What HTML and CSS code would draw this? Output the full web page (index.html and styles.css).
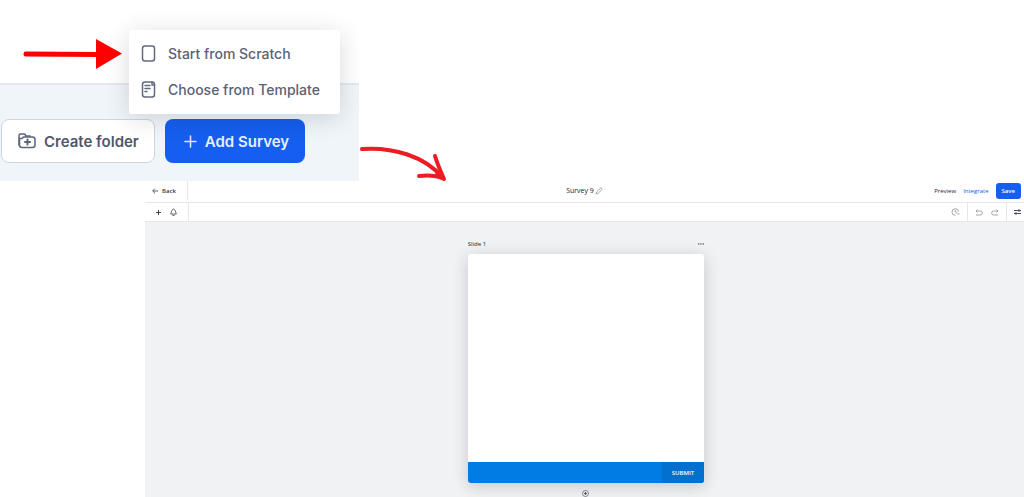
FILE: index.html
```html
<!DOCTYPE html>
<html lang="en">
<head>
  <meta charset="UTF-8" />
  <meta name="viewport" content="width=device-width, initial-scale=1.0"/>
  <title>Add Survey</title>
  <link rel="stylesheet" href="styles.css">
</head>
<body>

  <section class="folders">
    <div class="folders-top"></div>
    <div class="folders-actions">
      <button class="btn btn-folder">
        <svg width="18" height="16" viewBox="0 0 18 16" fill="none" stroke="#5b6579" stroke-width="1.5" stroke-linejoin="round" stroke-linecap="round">
          <path d="M1 12V2.500Q1 1 2.500 1H6.500L8 3H12"/>
          <path d="M1.500 5.500H4L5.500 4H14.500Q17 4 17 6.500V12Q17 14.500 14.500 14.500H4Q1.500 14.500 1.500 12Z"/>
          <path d="M9.500 6.500V11.500M7 9H12" stroke-width="2"/>
        </svg>
        Create folder
      </button>
      <button class="btn btn-survey">
        <svg width="13" height="13" viewBox="0 0 13 13" stroke="#dce7ff" stroke-width="1.600" stroke-linecap="round"><path d="M6.500 1V12M1 6.500H12"/></svg>
        Add Survey
      </button>
    </div>

    <div class="menu">
      <button class="menu-item">
        <svg width="15" height="17" viewBox="0 0 15 17" fill="none" stroke="#606a7d" stroke-width="1.500">
          <rect x="1.500" y="1" width="12" height="15" rx="2.500"/>
        </svg>
        Start from Scratch
      </button>
      <button class="menu-item">
        <svg width="15" height="17" viewBox="0 0 15 17" fill="none" stroke="#606a7d" stroke-width="1.500" stroke-linecap="round" stroke-linejoin="round">
          <rect x="1.500" y="1" width="12" height="15" rx="2.500"/>
          <path d="M11 1V4H13.500M4 4.500H9M4 7.500H9M4 10.500H6"/>
        </svg>
        Choose from Template
      </button>
    </div>
  </section>

  <main class="editor">
    <header class="bar bar-main">
      <a class="back" href="#">
        <svg width="6" height="6" viewBox="0 0 6 6" fill="none" stroke="#465064" stroke-width="0.900"><path d="M6 3H0.800M3 0.700L0.700 3L3 5.300"/></svg>
        Back
      </a>
      <h1 class="title">
        Survey 9
        <svg width="8" height="8" viewBox="0 0 8 8" fill="none" stroke="#8c93a0" stroke-width="0.800" stroke-linejoin="round"><path d="M1 7L1.500 5L5.800 0.800L7.200 2.200L3 6.500Z"/></svg>
      </h1>
      <nav class="actions">
        <a class="preview" href="#">Preview</a>
        <a class="integrate" href="#">Integrate</a>
        <button class="save">Save</button>
      </nav>
    </header>

    <div class="bar bar-tools">
      <div class="tools tools-add">
        <button class="tool" aria-label="Add element">
          <svg width="7" height="7" viewBox="0 0 7 7" stroke="#3c4453"><path d="M3.500 1V6M1 3.500H6"/></svg>
        </button>
        <button class="tool" aria-label="Theme">
          <svg width="7" height="8" viewBox="0 0 7 8" fill="none" stroke="#4a5262" stroke-width="0.900" stroke-linejoin="round"><path d="M3.500 0.700Q1.300 2.700 1.200 4.500L0.700 6H6.300L5.800 4.500Q5.700 2.700 3.500 0.700ZM2.300 7.300H4.700"/></svg>
        </button>
      </div>
      <div class="tools tools-history">
        <button class="tool" aria-label="History">
          <svg width="9" height="8" viewBox="0 0 9 8" fill="none" stroke="#969ba3" stroke-width="0.900"><path d="M4.500 7.300A3.300 3.300 0 1 1 7.600 3.800M4.300 2V4.200H6M5.500 5L7 6.500L8.500 5"/></svg>
        </button>
      </div>
      <div class="tools tools-undo">
        <button class="tool" aria-label="Undo">
          <svg width="8" height="7" viewBox="0 0 8 7" fill="none" stroke="#969ba3" stroke-width="0.900"><path d="M2.500 0.500L1 2L2.500 3.500M1 2H5.500Q7.300 2 7.300 4T5.500 6H1"/></svg>
        </button>
        <button class="tool" aria-label="Redo">
          <svg width="8" height="7" viewBox="0 0 8 7" fill="none" stroke="#969ba3" stroke-width="0.900"><path d="M5.500 0.500L7 2L5.500 3.500M7 2H2.500Q0.700 2 0.700 4T2.500 6H7"/></svg>
        </button>
      </div>
      <div class="tools tools-settings">
        <button class="tool" aria-label="Settings">
          <svg width="7" height="6" viewBox="0 0 7 6" fill="none" stroke="#4a5262" stroke-width="1"><path d="M0 1.500H7M0 4.500H7M5 0V3M2 3V6"/></svg>
        </button>
      </div>
    </div>

    <div class="canvas">
      <div class="slide">
        <div class="slide-head">
          <h2 class="slide-name">Slide 1</h2>
          <button class="tool" aria-label="Slide options">
            <svg width="6" height="2" viewBox="0 0 6 2" fill="#555b66"><rect width="1.300" height="1.300" x="0" y="0.300"/><rect width="1.300" height="1.300" x="2.300" y="0.300"/><rect width="1.300" height="1.300" x="4.600" y="0.300"/></svg>
          </button>
        </div>
        <div class="card">
          <div class="card-body"></div>
          <div class="card-foot">
            <button class="submit">SUBMIT</button>
          </div>
        </div>
        <button class="tool add-slide" aria-label="Add slide">
          <svg width="7" height="7" viewBox="0 0 7 7" fill="none" stroke="#555b66" stroke-width="0.700"><circle cx="3.500" cy="3.500" r="3"/><path d="M3.500 2V5M2 3.500H5" stroke-width="1"/></svg>
        </button>
      </div>
    </div>
  </main>

  <svg class="arrow arrow-start" width="100" height="32" viewBox="0 0 100 32">
    <path d="M3 16L75 16.500" stroke="#ff0000" stroke-width="5" stroke-linecap="round"/>
    <path d="M73 1L99 15.500L73 31Z" fill="#ff0000"/>
  </svg>
  <svg class="arrow arrow-next" width="90" height="38" viewBox="0 0 90 38" fill="none" stroke="#ed1c24" stroke-width="4" stroke-linecap="round" stroke-linejoin="round">
    <path d="M4 5C35 3 67 12 85 34"/>
    <path d="M77 12C79 19 82 26 86 35C78 31 70 31 61 32"/>
    <path d="M81 27L86 35L77 31Z" fill="#ed1c24" stroke-width="1"/>
  </svg>

</body>
</html>
```

FILE: styles.css
```css
* {
  box-sizing: border-box;
}

body {
  margin: 0;
  min-height: 100vh;
  display: flex;
  flex-direction: column;
  background: white;
  font-family: "Open Sans", sans-serif;
  position: relative;
}

button {
  border: none;
  padding: 0;
  background: none;
  font-family: inherit;
  cursor: pointer;
}

a {
  text-decoration: none;
}

svg {
  display: block;
  flex: none;
}

/* folder list strip */
.folders {
  width: 35%;
  min-width: 359px;
  position: relative;
  overflow: hidden;
  background: #f0f5f9;
  font-family: Inter, sans-serif;
}

.folders-top {
  height: 85px;
  background: white;
  border-bottom: 2px solid #e5e8ec;
}

.folders-actions {
  display: flex;
  gap: 10px;
  padding: 34px 0 18px 1px;
}

.btn {
  display: flex;
  align-items: center;
  gap: 8px;
  height: 44px;
  border-radius: 8px;
  font-size: 15px;
  font-weight: 600;
}

.btn-folder {
  padding: 0 15px 0 16px;
  background: white;
  border: 1px solid #cfd5df;
  color: #4f586b;
}

.btn-survey {
  padding: 0 16px 0 19px;
  background: #155eef;
  color: #e8efff;
}

.menu {
  position: absolute;
  top: 30px;
  left: 129px;
  padding: 5px 20px 7px 12px;
  background: white;
  border-radius: 3px;
  box-shadow: 0 4px 24px rgba(16, 24, 40, 0.16);
}

.menu-item {
  display: flex;
  align-items: center;
  gap: 12px;
  height: 36px;
  font-size: 14px;
  font-weight: 500;
  color: #596275;
  white-space: nowrap;
}

/* survey editor */
.editor {
  flex: 1;
  display: flex;
  flex-direction: column;
  margin-left: 145px;
}

.bar {
  display: flex;
  align-items: stretch;
  background: white;
  border-bottom: 1px solid #e6e7ea;
}

.bar-main {
  display: grid;
  grid-template-columns: 1fr auto 1fr;
  height: 22px;
  padding-bottom: 2px;
  font-size: 6px;
  font-weight: 600;
}

.back {
  justify-self: start;
  display: flex;
  align-items: center;
  gap: 4px;
  width: 43px;
  padding-left: 7px;
  border-right: 1px solid #e6e7ea;
  color: #303949;
}

.title {
  display: flex;
  align-items: center;
  gap: 1px;
  margin: 0;
  font-size: 7px;
  font-weight: 500;
  color: #20242c;
}

.actions {
  display: flex;
  align-items: center;
  justify-content: flex-end;
  gap: 7px;
  padding-right: 3px;
  font-weight: 500;
}

.preview {
  color: #20242c;
}

.integrate {
  color: #155eef;
}

.save {
  height: 16px;
  padding: 0 6px;
  border-radius: 3px;
  background: #155eef;
  color: white;
  font-size: 6px;
  font-weight: 600;
}

.bar-tools {
  height: 19px;
}

.tools {
  display: flex;
  align-items: center;
  gap: 8px;
  padding: 0 7px;
}

.tools-add {
  width: 44px;
  padding-left: 10px;
  border-right: 1px solid #e6e7ea;
}

.tools-history {
  margin-left: auto;
}

.tools-undo {
  border-left: 1px solid #e6e7ea;
  border-right: 1px solid #e6e7ea;
}

.tools-settings {
  padding: 0 3px 0 7px;
}

.canvas {
  flex: 1;
  display: flex;
  justify-content: center;
  padding: 16px 0 0 3px;
  background: #f1f2f4;
}

.slide {
  width: 27%;
  min-width: 220px;
  display: flex;
  flex-direction: column;
}

.slide-head {
  display: flex;
  align-items: center;
  justify-content: space-between;
  height: 12px;
  margin-bottom: 4px;
}

.slide-name {
  margin: 0;
  font-size: 6px;
  font-weight: 500;
  color: #20242c;
}

.card {
  border-radius: 3px;
  overflow: hidden;
  background: white;
  box-shadow: 0 3px 16px rgba(16, 24, 40, 0.2);
}

.card-body {
  height: 208px;
}

.card-foot {
  display: flex;
  justify-content: flex-end;
  height: 21px;
  background: #027ce5;
}

.submit {
  padding: 0 10px;
  background: #0270ce;
  color: white;
  font-size: 6px;
  font-weight: 600;
}

.add-slide {
  align-self: center;
  margin-top: 7px;
}

/* step arrows */
.arrow {
  position: absolute;
}

.arrow-start {
  top: 38px;
  left: 23px;
}

.arrow-next {
  top: 144px;
  left: 358px;
}
```
